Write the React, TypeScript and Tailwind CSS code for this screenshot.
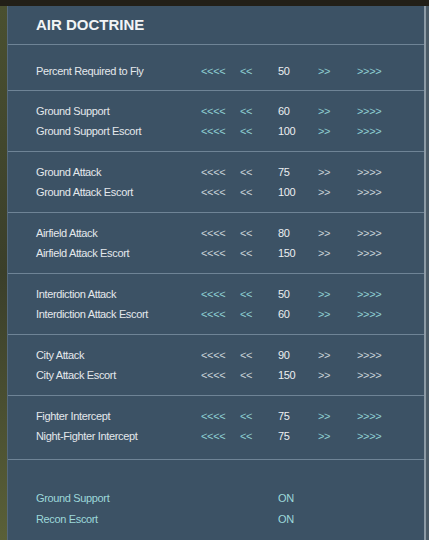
import React from "react";

type Row = { label: string; value: number };
type Group = { rows: Row[]; cyan: boolean };

const groups: Group[] = [
  { cyan: true, rows: [{ label: "Ground Support", value: 60 }, { label: "Ground Support Escort", value: 100 }] },
  { cyan: false, rows: [{ label: "Ground Attack", value: 75 }, { label: "Ground Attack Escort", value: 100 }] },
  { cyan: false, rows: [{ label: "Airfield Attack", value: 80 }, { label: "Airfield Attack Escort", value: 150 }] },
  { cyan: true, rows: [{ label: "Interdiction Attack", value: 50 }, { label: "Interdiction Attack Escort", value: 60 }] },
  { cyan: false, rows: [{ label: "City Attack", value: 90 }, { label: "City Attack Escort", value: 150 }] },
  { cyan: true, rows: [{ label: "Fighter Intercept", value: 75 }, { label: "Night-Fighter Intercept", value: 75 }] },
];

function DoctrineRow({ label, value, cyan }: Row & { cyan: boolean }) {
  const arrow = cyan ? "text-[#8fcfd2]" : "text-[#c9d2d8]";
  return (
    <div className="flex h-[20px] items-center text-[11px] tracking-[-0.35px]">
      <div className="w-[165px] shrink-0 text-[#e4e8ec]">{label}</div>
      <div className={`w-[39px] shrink-0 ${arrow}`}>&lt;&lt;&lt;&lt;</div>
      <div className={`w-[38px] shrink-0 ${arrow}`}>&lt;&lt;</div>
      <div className="w-[40px] shrink-0 text-[#eceff1]">{value}</div>
      <div className={`w-[39px] shrink-0 ${arrow}`}>&gt;&gt;</div>
      <div className={`shrink-0 ${arrow}`}>&gt;&gt;&gt;&gt;</div>
    </div>
  );
}

export default function App() {
  return (
    <div
      className="flex h-[540px] w-[429px] flex-col overflow-hidden bg-[#2a2a22]"
      style={{ fontFamily: '"Liberation Sans", Arial, sans-serif' }}
    >
      <div className="h-[6px] shrink-0 bg-[#221f17]" />
      <div className="flex flex-1">
        <div className="w-[7px] shrink-0 bg-gradient-to-b from-[#4a5030] via-[#3b3f2a] to-[#5a6038]" />
        <div className="flex w-[417px] shrink-0 flex-col border-l border-[#56697a] bg-[#3c5265]">
          <div className="flex h-[38px] items-center pl-[28px] text-[15px] font-bold text-[#f2f4f5]">
            AIR DOCTRINE
          </div>
          <div className="h-px bg-[#6f8496]" />
          <div className="pl-[28px] pt-[16px] pb-[9px]">
            <DoctrineRow label="Percent Required to Fly" value={50} cyan />
          </div>
          {groups.map((g, i) => (
            <React.Fragment key={i}>
              <div className="h-px bg-[#6f8496]" />
              <div className="pl-[28px] pt-[10px] pb-[10px]">
                {g.rows.map((r) => (
                  <DoctrineRow key={r.label} {...r} cyan={g.cyan} />
                ))}
              </div>
            </React.Fragment>
          ))}
          <div className="mt-[3px] h-px bg-[#6f8496]" />
          <div className="pl-[28px] pt-[28px] text-[11px] tracking-[-0.35px] text-[#9dd8da]">
            <div className="flex h-[21px] items-center">
              <div className="w-[242px]">Ground Support</div>
              <div>ON</div>
            </div>
            <div className="flex h-[21px] items-center">
              <div className="w-[242px]">Recon Escort</div>
              <div>ON</div>
            </div>
          </div>
        </div>
        <div className="w-[2px] shrink-0 bg-[#8d9ba6]" />
        <div className="flex-1 bg-[#4a5a66]" />
      </div>
    </div>
  );
}
